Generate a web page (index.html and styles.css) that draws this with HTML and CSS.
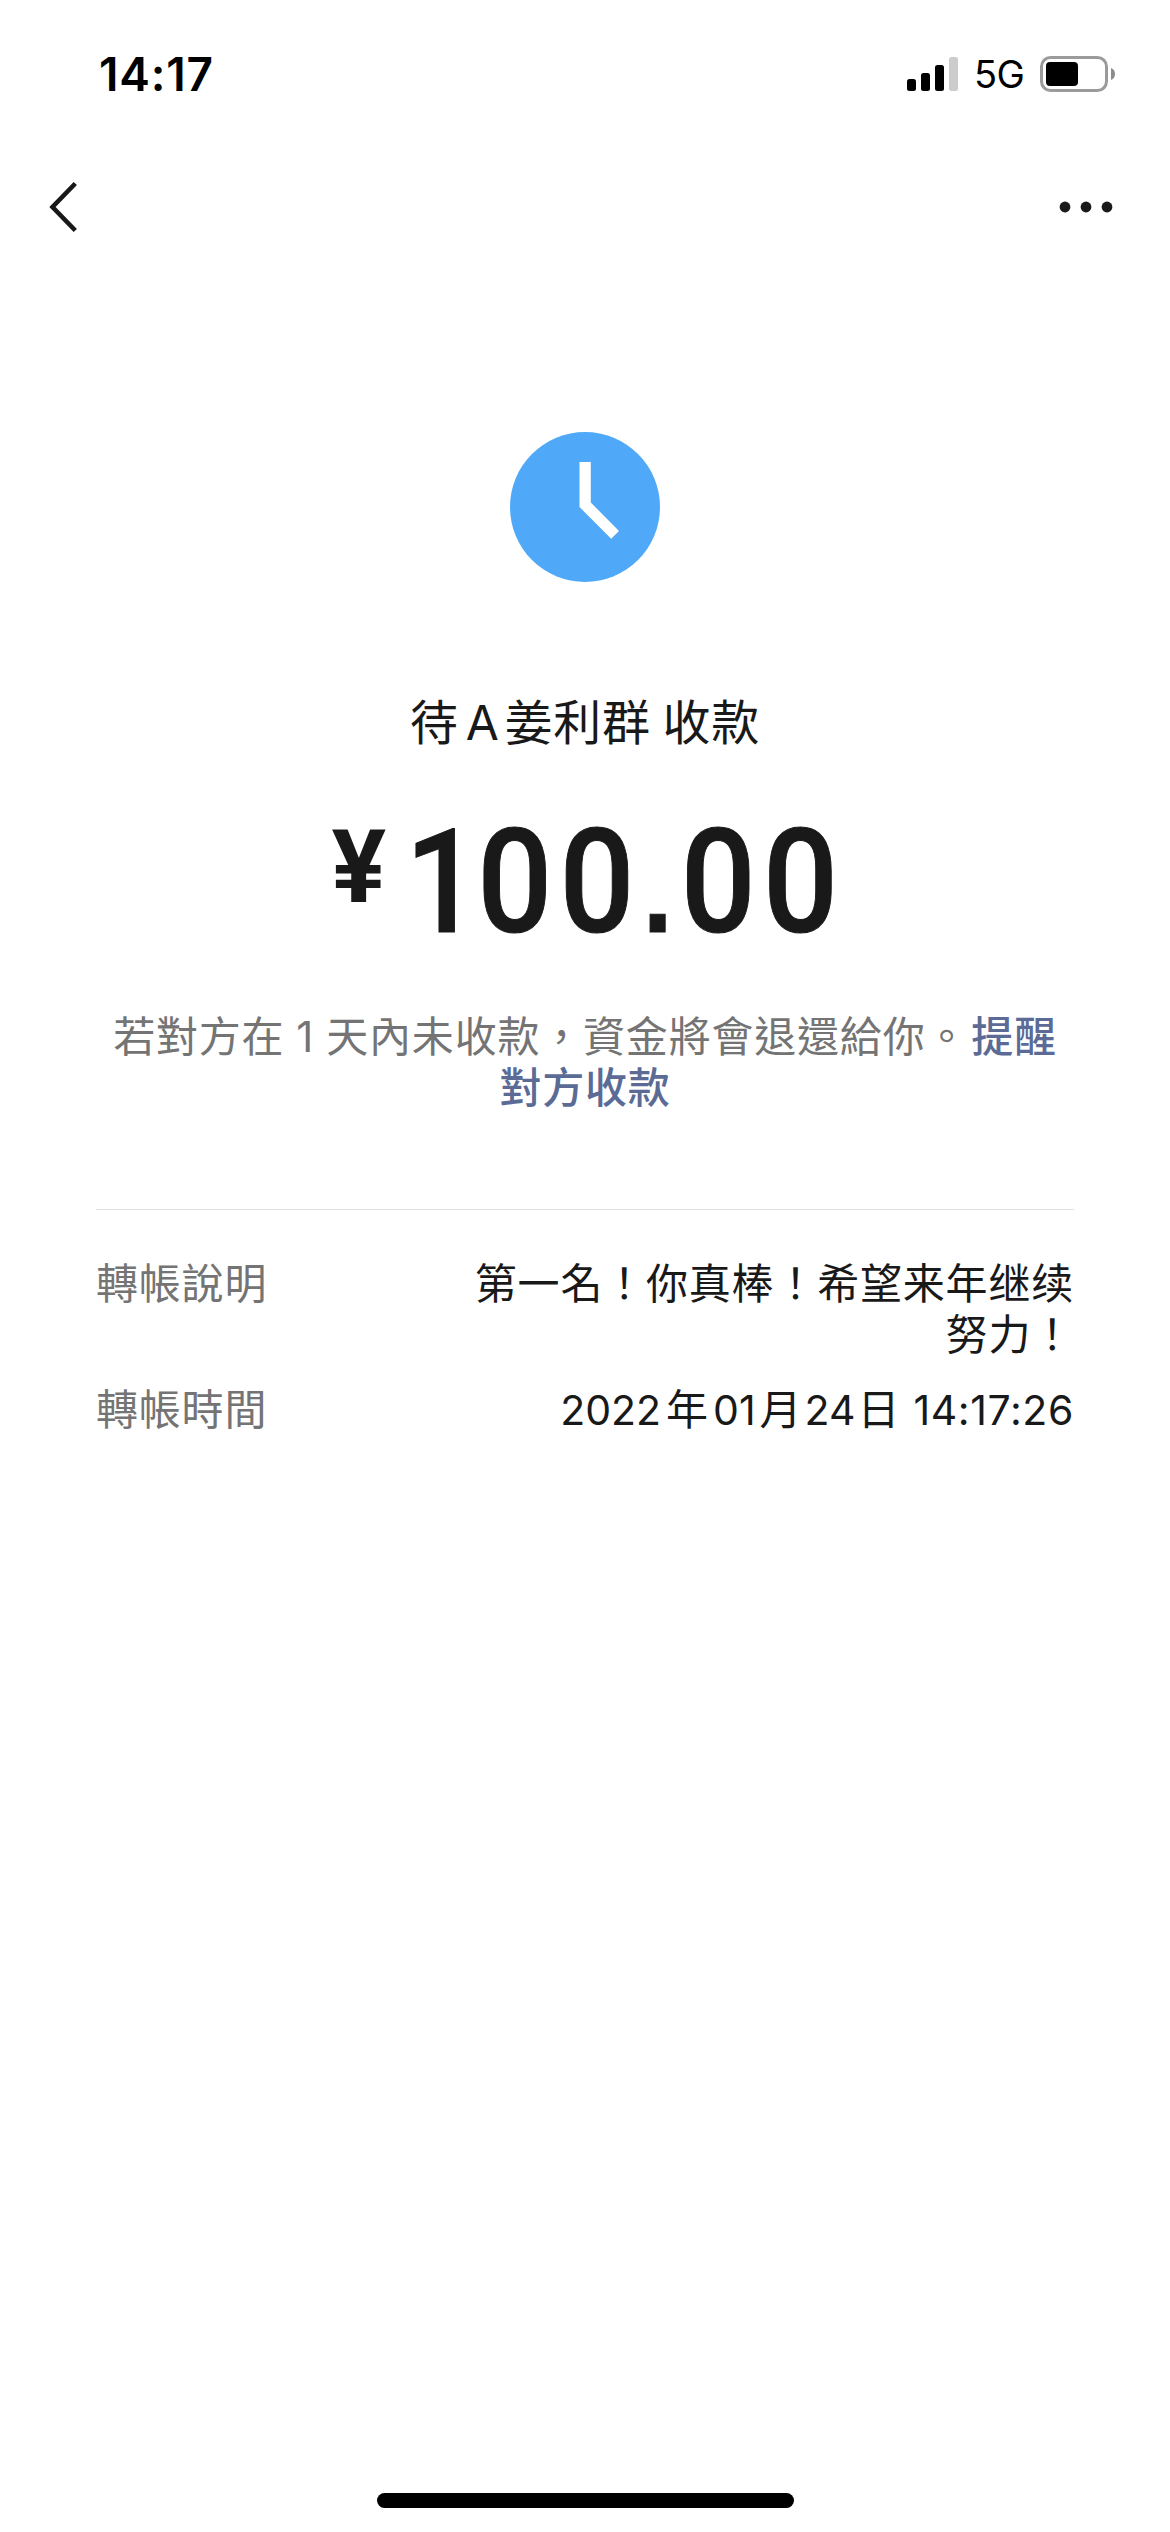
FILE: index.html
```html
<!DOCTYPE html>
<html lang="zh-Hant">
<head>
<meta charset="utf-8">
<title>轉帳</title>
<link rel="stylesheet" href="styles.css">
</head>
<body>
<div class="screen">
  <header class="status-bar">
    <time class="clock">14:17</time>
    <div class="indicators">
      <svg class="signal" width="51" height="34" viewBox="0 0 51 34">
        <rect x="0" y="22" width="9" height="12" rx="2.5"/>
        <rect x="14" y="16" width="9" height="18" rx="2.5"/>
        <rect x="28" y="8" width="9" height="26" rx="2.5"/>
        <rect x="42" y="0" width="9" height="34" rx="2.5" fill="#ccc"/>
      </svg>
      <span class="network">5G</span>
      <svg class="battery" width="75" height="36" viewBox="0 0 75 36">
        <rect x="1.5" y="1.5" width="65" height="33" rx="9" fill="none" stroke="#9b9b9b" stroke-width="3"/>
        <rect x="6" y="6" width="32" height="24" rx="4"/>
        <path d="M71 12c2.6 1 4 3.300 4 6s-1.400 5-4 6z" fill="#8c8c8c"/>
      </svg>
    </div>
  </header>
  <nav class="nav-bar">
    <svg class="back" width="30" height="52" viewBox="0 0 30 52" fill="none" stroke="#191919" stroke-width="4.600">
      <path d="M26.300 2.500 3.500 26l22.800 23.500"/>
    </svg>
    <svg class="more" width="54" height="12" viewBox="0 0 54 12" fill="#191919">
      <circle cx="6" cy="6" r="5.400"/><circle cx="27" cy="6" r="5.400"/><circle cx="48" cy="6" r="5.400"/>
    </svg>
  </nav>
  <main class="content">
    <svg class="pending" width="150" height="150" viewBox="0 0 150 150">
      <circle cx="75" cy="75" r="75" fill="#50a9f8"/>
      <path d="M69.500 30h11.300v40.500L109 99l-7.800 7.800L69.500 75z" fill="#fff"/>
    </svg>
    <h1 class="title">待<span class="latin">A</span>姜利群<span class="gap"></span>收款</h1>
    <div class="amount"><span class="currency">¥</span><span class="value"><span class="lead">1</span>00<span class="point">.</span>00</span></div>
    <p class="notice">若對方在<span class="day">1</span>天內未收款，資金將會退還給你。<a class="remind">提醒<br>對方收款</a></p>
    <dl class="details">
      <div class="row"><dt>轉帳說明</dt><dd>第一名！你真棒！希望来年继续<br>努力！</dd></div>
      <div class="row"><dt>轉帳時間</dt><dd class="date">2022<span class="unit">年</span>01<span class="unit month">月</span>24<span class="unit date-day">日</span><span class="hour">14:17:26</span></dd></div>
    </dl>
  </main>
  <footer class="home"><div class="home-bar"></div></footer>
</div>
</body>
</html>
```
FILE: styles.css
```css
* { box-sizing: border-box; }
body {
  margin: 0;
  background: #fff;
  color: #191919;
  font-family: Inter, "Noto Sans CJK TC", sans-serif;
}
svg { display: block; }
.screen {
  width: 1170px;
  height: 2532px;
  display: flex;
  flex-direction: column;
  overflow: hidden;
}
.status-bar {
  height: 148px;
  padding: 0 55px 0 99px;
  display: flex;
  justify-content: space-between;
  align-items: center;
  color: #000;
}
.clock { font-size: 46px; font-weight: 600; line-height: 56px; letter-spacing: 0.8px; }
.indicators { display: flex; align-items: center; }
.network {
  width: 82px;
  padding-left: 16px;
  font-size: 38px;
  line-height: 40px;
  letter-spacing: -0.5px;
}
.nav-bar {
  height: 118px;
  padding: 0 57px 0 49px;
  display: flex;
  justify-content: space-between;
  align-items: center;
}
.content {
  flex: 1;
  padding: 166px 96px 0;
  display: flex;
  flex-direction: column;
  align-items: center;
}
.title {
  margin: 106px 0 0;
  font-size: 48px;
  font-weight: 400;
  line-height: 70px;
  letter-spacing: 0.7px;
  white-space: nowrap;
}
.latin { margin: 0 5px 0 7px; }
.gap { display: inline-block; width: 12px; }
.amount {
  width: 507px;
  margin-top: 57px;
  height: 135px;
  display: flex;
  align-items: flex-start;
  font-family: Roboto, sans-serif;
  white-space: nowrap;
}
.currency {
  flex: none;
  width: 73px;
  padding-top: 1px;
  font-size: 102px;
  font-weight: 700;
  line-height: 102px;
}
.value {
  font-size: 145px;
  font-weight: 500;
  line-height: 134px;
  letter-spacing: 8px;
  -webkit-text-stroke: 1px #191919;
  transform: scaleX(0.91);
  transform-origin: left;
}
.lead { letter-spacing: -3px; }
.point {
  margin: 0 1px;
  font: 700 118px/0 "Liberation Sans", sans-serif;
}
.notice {
  margin: 61px 0 0;
  color: #747474;
  font-size: 42px;
  line-height: 51px;
  letter-spacing: 0.8px;
  text-align: center;
  white-space: nowrap;
}
.day { margin: 0 12px 0 12px; }
.remind { margin-left: 3px; color: #5b6b95; font-weight: 500; }
.details {
  width: 100%;
  margin: 96px 0 0;
  padding-top: 48px;
  border-top: 1px solid #e2e2e2;
  display: flex;
  flex-direction: column;
  gap: 24px;
  font-size: 42px;
  line-height: 51px;
  letter-spacing: 0.8px;
}
.row { display: flex; justify-content: space-between; }
dt { color: #747474; }
dd { margin: 0; text-align: right; white-space: nowrap; }
.date { font-size: 41px; letter-spacing: 0; }
.unit { margin: 0 5px; font-size: 42px; }
.month { margin: 0 3px 0 4px; }
.date-day { margin-left: 2px; }
.hour { margin-left: 9px; letter-spacing: 0.6px; }
.home {
  height: 39px;
  display: flex;
  justify-content: center;
  align-items: flex-start;
}
.home-bar { width: 417px; height: 15px; border-radius: 8px; background: #000; }
```
